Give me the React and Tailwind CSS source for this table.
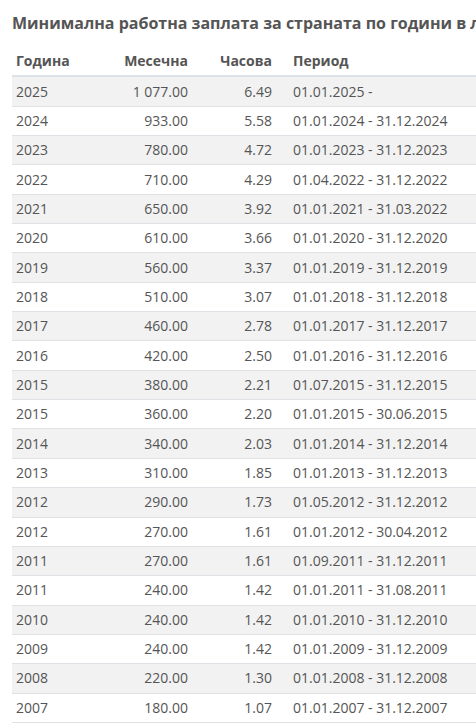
import React from "react";

const ROWS = [
  ["2025", "1 077.00", "6.49", "01.01.2025 -"],
  ["2024", "933.00", "5.58", "01.01.2024 - 31.12.2024"],
  ["2023", "780.00", "4.72", "01.01.2023 - 31.12.2023"],
  ["2022", "710.00", "4.29", "01.04.2022 - 31.12.2022"],
  ["2021", "650.00", "3.92", "01.01.2021 - 31.03.2022"],
  ["2020", "610.00", "3.66", "01.01.2020 - 31.12.2020"],
  ["2019", "560.00", "3.37", "01.01.2019 - 31.12.2019"],
  ["2018", "510.00", "3.07", "01.01.2018 - 31.12.2018"],
  ["2017", "460.00", "2.78", "01.01.2017 - 31.12.2017"],
  ["2016", "420.00", "2.50", "01.01.2016 - 31.12.2016"],
  ["2015", "380.00", "2.21", "01.07.2015 - 31.12.2015"],
  ["2015", "360.00", "2.20", "01.01.2015 - 30.06.2015"],
  ["2014", "340.00", "2.03", "01.01.2014 - 31.12.2014"],
  ["2013", "310.00", "1.85", "01.01.2013 - 31.12.2013"],
  ["2012", "290.00", "1.73", "01.05.2012 - 31.12.2012"],
  ["2012", "270.00", "1.61", "01.01.2012 - 30.04.2012"],
  ["2011", "270.00", "1.61", "01.09.2011 - 31.12.2011"],
  ["2011", "240.00", "1.42", "01.01.2011 - 31.08.2011"],
  ["2010", "240.00", "1.42", "01.01.2010 - 31.12.2010"],
  ["2009", "240.00", "1.42", "01.01.2009 - 31.12.2009"],
  ["2008", "220.00", "1.30", "01.01.2008 - 31.12.2008"],
  ["2007", "180.00", "1.07", "01.01.2007 - 31.12.2007"],
];

export default function App() {
  return (
    <div className="w-[476px] h-[724px] overflow-hidden bg-white text-[#555] font-['Open_Sans',sans-serif]">
      <div className="w-[660px] px-[12px]">
        <h2 className="pt-[13px] mb-[14px] text-[16px] leading-[20px] font-bold whitespace-nowrap">
          Минимална работна заплата за страната по години в лева
        </h2>
        <table className="w-full border-collapse text-[14px] leading-[20px]">
          <thead>
            <tr>
              <th className="w-[90px] pl-[4px] py-[4.18px] text-left font-bold border-b-2 border-[#dee2e6]">Година</th>
              <th className="w-[90px] pr-[4px] py-[4.18px] text-right font-bold border-b-2 border-[#dee2e6]">Месечна</th>
              <th className="w-[88px] pr-[8px] py-[4.18px] text-right font-bold border-b-2 border-[#dee2e6]">Часова</th>
              <th className="pl-[13px] py-[4.18px] text-left font-bold border-b-2 border-[#dee2e6]">Период</th>
            </tr>
          </thead>
          <tbody>
            {ROWS.map((r, i) => (
              <tr key={i} className={i % 2 === 0 ? "bg-[#f2f2f2]" : "bg-white"}>
                <td className="pl-[4px] py-[4.18px] text-left border-b border-[#dee2e6]">{r[0]}</td>
                <td className="pr-[4px] py-[4.18px] text-right border-b border-[#dee2e6]">{r[1]}</td>
                <td className="pr-[8px] py-[4.18px] text-right border-b border-[#dee2e6]">{r[2]}</td>
                <td className="pl-[13px] py-[4.18px] text-left border-b border-[#dee2e6]">{r[3]}</td>
              </tr>
            ))}
          </tbody>
        </table>
      </div>
    </div>
  );
}
